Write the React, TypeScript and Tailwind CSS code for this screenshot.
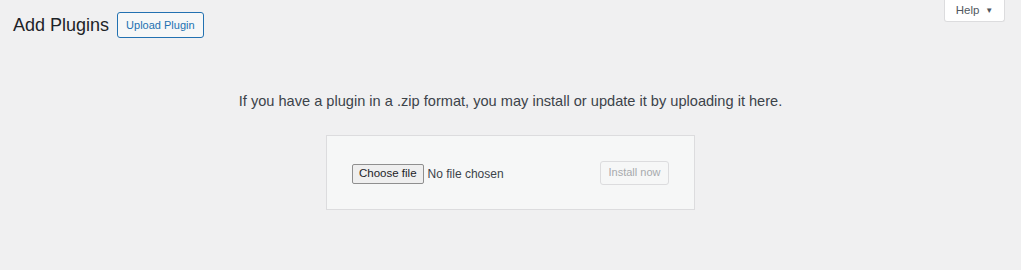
import React from 'react';

const font = { fontFamily: '"Liberation Sans", Arial, sans-serif' };

export default function App() {
    return (
        <div className="w-[1024px] h-[273px] bg-white" style={font}>
            <div className="w-[1021px] h-[270px] bg-[#f0f0f1] flex flex-col">
                {/* top bar: title + help tab */}
                <div className="flex items-start justify-between pl-[13px] pr-[16px]">
                    <div className="flex items-center gap-[8px] pt-[12px]">
                        <h1 className="text-[18px] leading-[26px] text-[#1d2327]">Add Plugins</h1>
                        <button className="h-[26px] px-[8px] border border-[#2271b1] rounded-[3px] bg-[#f6f7f7] text-[11px] font-medium text-[#2271b1]">
                            Upload Plugin
                        </button>
                    </div>
                    <button className="w-[61px] h-[22px] bg-white border border-t-0 border-[#dcdcde] rounded-b-[3px] flex items-center justify-center gap-[6px] text-[11.5px] text-[#50575e]">
                        Help
                        <span className="text-[8px] leading-none">▼</span>
                    </button>
                </div>

                <p className="mt-[53px] text-center text-[14.6px] leading-[20px] text-[#3c434a]">
                    If you have a plugin in a .zip format, you may install or update it by uploading it here.
                </p>

                <div className="mt-[24px] mx-auto w-[369px] h-[75px] bg-[#f6f7f7] border border-[#dcdcde] flex items-center justify-between pl-[25px] pr-[25px]">
                    <div className="flex items-center gap-[4px] pt-[2px]">
                        <span className="h-[20px] px-[6px] flex items-center bg-[#efefef] border border-[#8f8f8f] rounded-[2px] text-[11.5px] text-[#1d2327]">
                            Choose file
                        </span>
                        <span className="text-[12px] text-[#3c434a]">No file chosen</span>
                    </div>
                    <button className="w-[69px] h-[24px] border border-[#dcdcde] rounded-[3px] bg-[#f6f7f7] text-[11px] text-[#a7aaad]">
                        Install now
                    </button>
                </div>
            </div>
        </div>
    );
}
